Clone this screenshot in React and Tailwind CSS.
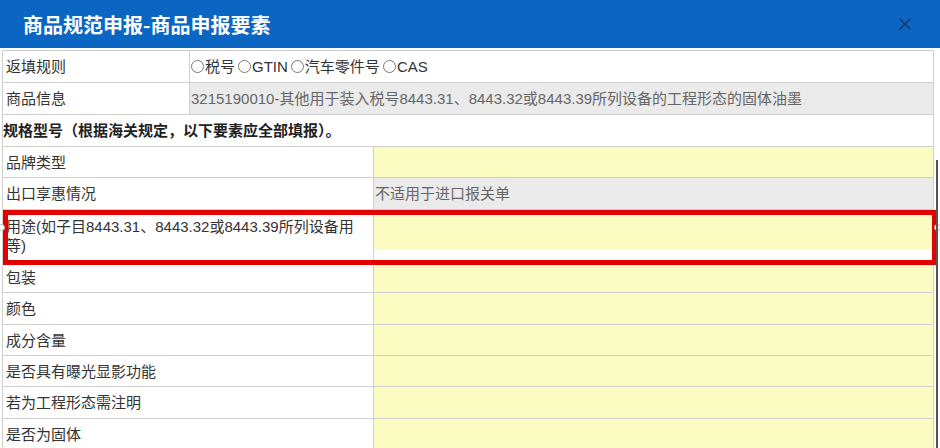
import { X } from 'lucide-react';

const yellowRows = [
  { label: '品牌类型', h: 'h-[31px]' },
  { label: '出口享惠情况', h: 'h-[32px]', gray: '不适用于进口报关单' },
  { label: 'usage', h: 'h-[53px]' },
  { label: '包装', h: 'h-[30px]' },
  { label: '颜色', h: 'h-[32px]' },
  { label: '成分含量', h: 'h-[31px]' },
  { label: '是否具有曝光显影功能', h: 'h-[31px]' },
  { label: '若为工程形态需注明', h: 'h-[32px]' },
  { label: '是否为固体', h: 'h-[31px]' },
];

function Radio({ children }) {
  return (
    <span className="inline-flex items-center mr-[3px]">
      <span className="inline-block w-[13px] h-[13px] rounded-full border border-[#777] mr-[1px]"></span>
      {children}
    </span>
  );
}

export default function App() {
  const cell = 'border border-[#cfcfcf] align-middle';

  return (
    <div className="relative w-[940px] h-[448px] overflow-hidden bg-white text-[15px] leading-[19px] text-[#333] font-['Liberation_Sans','Noto_Sans_CJK_SC',sans-serif]">
      {/* title bar */}
      <div className="flex items-center justify-between h-[48px] bg-[#0b66c3] pl-[23px] pr-[25px]">
        <h1 className="text-[20px] font-bold text-white font-['Noto_Sans_CJK_SC',sans-serif]">商品规范申报-商品申报要素</h1>
        <X className="w-[20px] h-[20px] text-[#1c355e]" strokeWidth={1.8} />
      </div>

      <div className="pt-[2px] pl-[2px]">
        <table className="w-[932px] table-fixed border-collapse border border-[#c4c4c4]">
          <colgroup>
            <col className="w-[187px]" />
            <col className="w-[184px]" />
            <col />
          </colgroup>
          <tbody>
            <tr className="h-[32px]">
              <td className={`${cell} pl-[3px]`}>返填规则</td>
              <td colSpan={2} className={`${cell} pl-[1px]`}>
                <Radio>税号</Radio>
                <Radio>GTIN</Radio>
                <Radio>汽车零件号</Radio>
                <Radio>CAS</Radio>
              </td>
            </tr>
            <tr className="h-[32px]">
              <td className={`${cell} pl-[3px]`}>商品信息</td>
              <td colSpan={2} className={`${cell} pl-[1px] bg-[#eaeaea] text-[#666] whitespace-nowrap`}>
                3215190010-其他用于装入税号8443.31、8443.32或8443.39所列设备的工程形态的固体油墨
              </td>
            </tr>
            <tr className="h-[32px]">
              <td colSpan={3} className={`${cell} pl-0 font-bold text-[#222]`}>
                规格型号（根据海关规定，以下要素应全部填报）。
              </td>
            </tr>
            {yellowRows.map((r) => (
              <tr key={r.label} className={r.h}>
                <td colSpan={2} className={`${cell} pl-[3px]`}>
                  {r.label === 'usage' ? (
                    <>
                      用途(如子目8443.31、8443.32或8443.39所列设备用
                      <br />
                      等)
                    </>
                  ) : (
                    r.label
                  )}
                </td>
                {r.gray ? (
                  <td className={`${cell} pl-[1px] bg-[#eaeaea] text-[#666]`}>{r.gray}</td>
                ) : r.label === 'usage' ? (
                  <td className={`${cell} align-top p-0`}>
                    <div className="h-[40px] bg-[#fafcc2]"></div>
                  </td>
                ) : (
                  <td className={`${cell} bg-[#fafcc2]`}></td>
                )}
              </tr>
            ))}
          </tbody>
        </table>
      </div>

      {/* red highlight frame */}
      <div className="absolute left-[3px] top-[210px] w-[934px] h-[55px] border-[5px] border-[#e30000]"></div>
      <div className="absolute left-[-2px] top-[224px] w-[7px] h-[7px] rounded-full bg-white border border-[#bbb]"></div>
      <div className="absolute left-[934px] top-[224px] w-[7px] h-[7px] rounded-full bg-white border border-[#bbb]"></div>

      {/* scroll edge */}
      <div className="absolute left-[936px] top-[160px] w-[2px] h-[288px] bg-[#555]"></div>
    </div>
  );
}
